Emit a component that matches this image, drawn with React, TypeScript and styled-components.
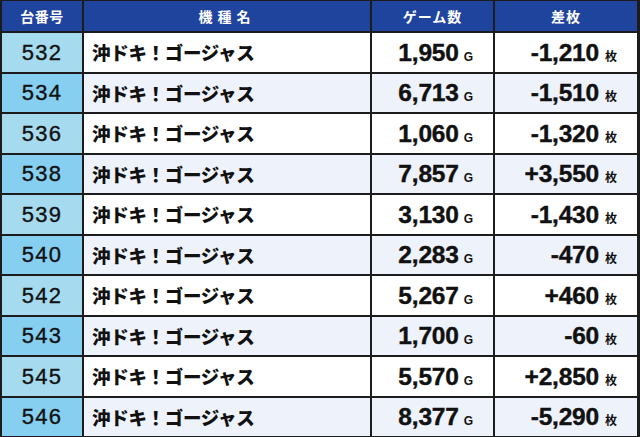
import styled, { createGlobalStyle } from "styled-components";

const GlobalStyle = createGlobalStyle`
  html, body {
    margin: 0;
    padding: 0;
    background: #ffffff;
  }
`;

type Machine = {
  no: number;
  name: string;
  games: string;
  diff: string;
};

const rows: Machine[] = [
  { no: 532, name: "沖ドキ！ゴージャス", games: "1,950", diff: "-1,210" },
  { no: 534, name: "沖ドキ！ゴージャス", games: "6,713", diff: "-1,510" },
  { no: 536, name: "沖ドキ！ゴージャス", games: "1,060", diff: "-1,320" },
  { no: 538, name: "沖ドキ！ゴージャス", games: "7,857", diff: "+3,550" },
  { no: 539, name: "沖ドキ！ゴージャス", games: "3,130", diff: "-1,430" },
  { no: 540, name: "沖ドキ！ゴージャス", games: "2,283", diff: "-470" },
  { no: 542, name: "沖ドキ！ゴージャス", games: "5,267", diff: "+460" },
  { no: 543, name: "沖ドキ！ゴージャス", games: "1,700", diff: "-60" },
  { no: 545, name: "沖ドキ！ゴージャス", games: "5,570", diff: "+2,850" },
  { no: 546, name: "沖ドキ！ゴージャス", games: "8,377", diff: "-5,290" },
];

const Table = styled.div`
  width: 640px;
  height: 437px;
  box-sizing: border-box;
  padding: 1px 3px 1px 2px;
  background: #1c1c1c;
  display: grid;
  grid-template-rows: 30px repeat(10, 1fr);
  gap: 2px;
`;

const Row = styled.div`
  display: grid;
  grid-template-columns: 80px 286px 121px 1fr;
  gap: 2px;
`;

const HeadCell = styled.div<{ $spacing?: number }>`
  background: #1f449e;
  color: #ffffff;
  display: flex;
  align-items: center;
  justify-content: center;
  font-family: "Noto Sans CJK JP", "Liberation Sans", sans-serif;
  font-weight: 700;
  font-size: 14px;
  letter-spacing: ${(p) => p.$spacing ?? 0.5}px;
`;

const NoCell = styled.div<{ $even: boolean }>`
  background: ${(p) => (p.$even ? "#86cff0" : "#a6dbef")};
  color: #111111;
  display: flex;
  align-items: center;
  justify-content: center;
  font-family: "Liberation Sans", Arial, sans-serif;
  font-size: 22px;
  letter-spacing: 1.2px;
  -webkit-text-stroke: 0.35px #111111;
  padding-top: 1px;
`;

const NameCell = styled.div<{ $even: boolean }>`
  background: ${(p) => (p.$even ? "#eef2fa" : "#ffffff")};
  color: #111111;
  display: flex;
  align-items: center;
  padding-left: 8px;
  font-family: "Noto Sans CJK JP", sans-serif;
  font-weight: 900;
  font-size: 18.5px;
  letter-spacing: -0.3px;
`;

const ValueCell = styled.div<{ $even: boolean }>`
  background: ${(p) => (p.$even ? "#eef2fa" : "#ffffff")};
  color: #111111;
  display: flex;
  align-items: center;
  justify-content: flex-end;
  padding-right: 20px;
  padding-top: 1px;
`;

const Value = styled.span`
  display: inline-flex;
  align-items: baseline;
  line-height: 1;
`;

const Num = styled.span`
  font-family: "Liberation Sans", Arial, sans-serif;
  font-weight: 700;
  font-size: 24.5px;
  letter-spacing: -0.2px;
  -webkit-text-stroke: 0.4px #111111;
`;

const Unit = styled.span<{ $cjk?: boolean }>`
  font-family: ${(p) =>
    p.$cjk ? '"Noto Sans CJK JP", sans-serif' : '"Liberation Sans", Arial, sans-serif'};
  font-weight: 700;
  font-size: 12px;
  margin-left: ${(p) => (p.$cjk ? "6px" : "5px")};
`;

export default function App() {
  return (
    <>
      <GlobalStyle />
      <Table>
        <Row>
          <HeadCell>台番号</HeadCell>
          <HeadCell $spacing={5}>機種名</HeadCell>
          <HeadCell $spacing={1}>ゲーム数</HeadCell>
          <HeadCell $spacing={1}>差枚</HeadCell>
        </Row>
        {rows.map((r, i) => {
          const even = i % 2 === 1;
          return (
            <Row key={r.no}>
              <NoCell $even={even}>{r.no}</NoCell>
              <NameCell $even={even}>{r.name}</NameCell>
              <ValueCell $even={even}>
                <Value>
                  <Num>{r.games}</Num>
                  <Unit>G</Unit>
                </Value>
              </ValueCell>
              <ValueCell $even={even}>
                <Value>
                  <Num>{r.diff}</Num>
                  <Unit $cjk>枚</Unit>
                </Value>
              </ValueCell>
            </Row>
          );
        })}
      </Table>
    </>
  );
}
